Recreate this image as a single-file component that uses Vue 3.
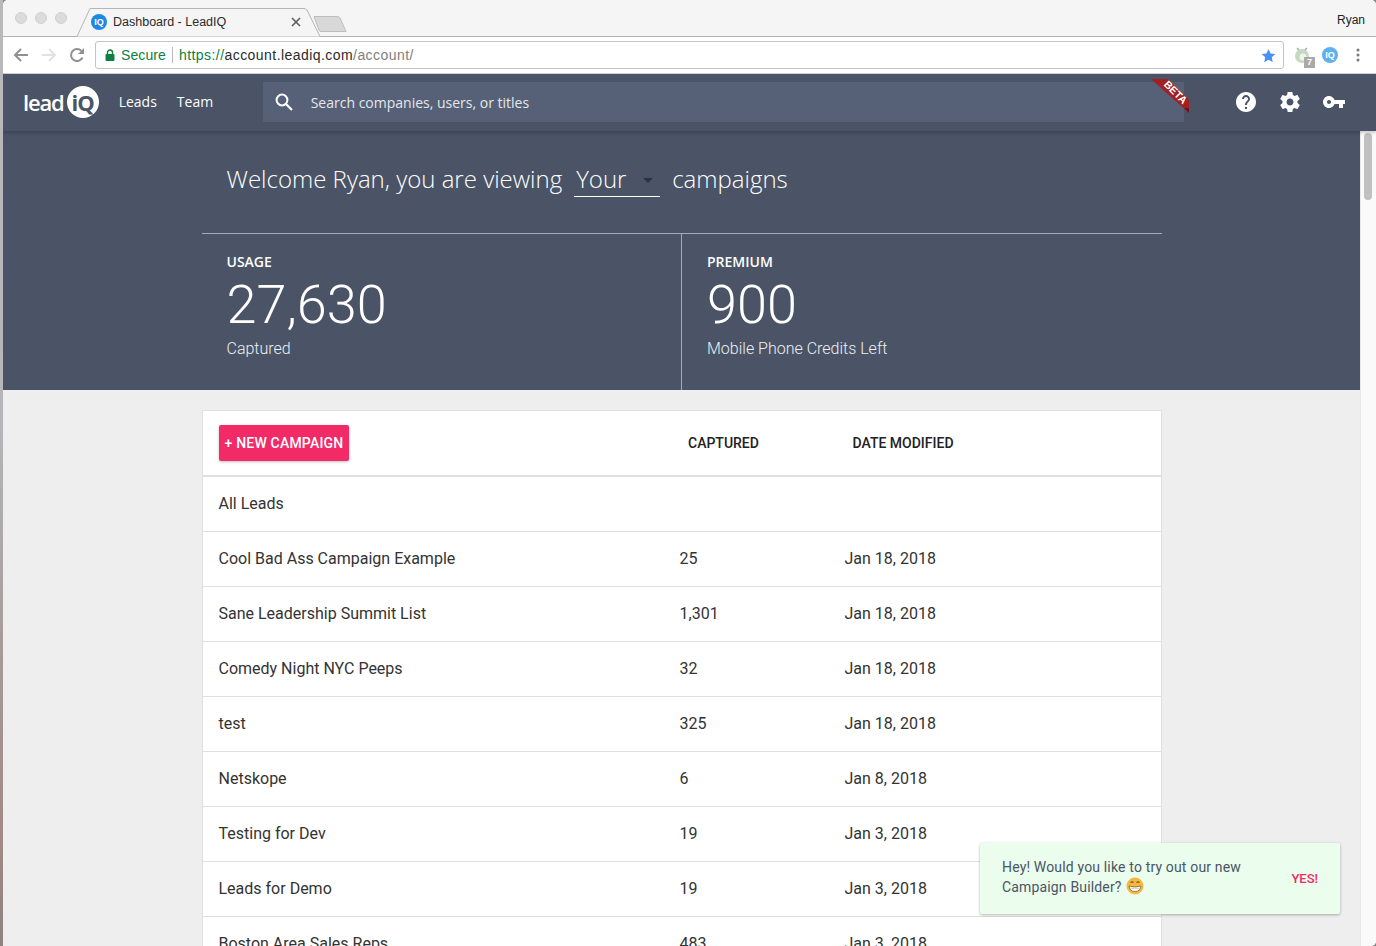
<script setup>
const stats = [
  { label: 'USAGE', value: '27,630', note: 'Captured' },
  { label: 'PREMIUM', value: '900', note: 'Mobile Phone Credits Left' },
];

const campaigns = [
  { name: 'All Leads', captured: '', date: '' },
  { name: 'Cool Bad Ass Campaign Example', captured: '25', date: 'Jan 18, 2018' },
  { name: 'Sane Leadership Summit List', captured: '1,301', date: 'Jan 18, 2018' },
  { name: 'Comedy Night NYC Peeps', captured: '32', date: 'Jan 18, 2018' },
  { name: 'test', captured: '325', date: 'Jan 18, 2018' },
  { name: 'Netskope', captured: '6', date: 'Jan 8, 2018' },
  { name: 'Testing for Dev', captured: '19', date: 'Jan 3, 2018' },
  { name: 'Leads for Demo', captured: '19', date: 'Jan 3, 2018' },
  { name: 'Boston Area Sales Reps', captured: '483', date: 'Jan 3, 2018' },
];
</script>

<template>
  <div class="desktop">
    <div class="wallpaper"></div>
    <div class="window">
      <!-- browser tabs -->
      <div class="tabstrip">
        <div class="lights"><i></i><i></i><i></i></div>
        <svg class="tab-shape" width="254" height="37" viewBox="0 0 254 37">
          <path d="M0 36.5H2L15 8.500Q15.500 8.500 18 8.500H228Q231 8.500 232 10L245 36.500H254" fill="#f5f5f5" stroke="#b4b4b4" />
        </svg>
        <div class="tab">
          <span class="favicon">IQ</span>
          <span class="tab-title">Dashboard - LeadIQ</span>
          <svg class="tab-close" width="10" height="10" viewBox="0 0 10 10">
            <path d="M1 1L9 9M9 1L1 9" stroke="#5a5a5a" stroke-width="1.6" />
          </svg>
        </div>
        <svg class="new-tab" width="34" height="18" viewBox="0 0 34 18">
          <path d="M1 1.5H24Q26 1.5 27 3L33 16.5H8Q6.5 16.5 6 15Z" fill="#d8d8d8" stroke="#bdbdbd" />
        </svg>
        <span class="profile">Ryan</span>
      </div>

      <!-- browser toolbar -->
      <div class="toolbar">
        <svg class="nav-icon" width="16" height="16" viewBox="0 0 16 16">
          <path d="M15 8H2M8 2L2 8L8 14" fill="none" stroke="#909090" stroke-width="2" />
        </svg>
        <svg class="nav-icon" width="16" height="16" viewBox="0 0 16 16">
          <path d="M1 8H14M8 2L14 8L8 14" fill="none" stroke="#e2e2e2" stroke-width="2" />
        </svg>
        <svg class="nav-icon" width="16" height="16" viewBox="0 0 16 16">
          <path d="M13.5 10.5A6 6 0 1 1 12.3 3.8" fill="none" stroke="#909090" stroke-width="2" />
          <path d="M15 1V7H9Z" fill="#909090" />
        </svg>
        <div class="omnibox">
          <svg width="10" height="12" viewBox="0 0 10 12">
            <path d="M2.5 5V3.5a2.5 2.5 0 0 1 5 0V5" fill="none" stroke="#0b8043" stroke-width="1.4" />
            <rect x="0.5" y="5" width="9" height="7" rx="1" fill="#0b8043" />
          </svg>
          <span class="secure">Secure</span>
          <span class="omni-sep"></span>
          <span class="url"><span class="scheme">https://</span><span class="host">account.leadiq.com</span>/account/</span>
          <svg class="star" width="15" height="15" viewBox="0 0 24 24">
            <path d="M12 1.5l3.3 7.2 7.7.9-5.7 5.3 1.5 7.7L12 18.7l-6.8 3.9 1.5-7.7L1 9.6l7.7-.9z" fill="#4a90f0" />
          </svg>
        </div>
        <div class="extensions">
          <span class="ext-grey">
            <svg width="18" height="18" viewBox="0 0 18 18">
              <circle cx="8" cy="10" r="7" fill="#c5d8c0" />
              <circle cx="9" cy="11" r="3.5" fill="#eef3ec" />
              <path d="M3 2L5 4M13 2L11 4" stroke="#a5a5a5" stroke-width="1.4" />
            </svg>
            <b>7</b>
          </span>
          <span class="ext-iq">IQ</span>
          <svg class="ext-menu" width="4" height="14" viewBox="0 0 4 14">
            <circle cx="2" cy="2" r="1.5" fill="#777" />
            <circle cx="2" cy="7" r="1.5" fill="#777" />
            <circle cx="2" cy="12" r="1.5" fill="#777" />
          </svg>
        </div>
      </div>

      <!-- app header -->
      <header class="appbar">
        <div class="logo">lead<span>iQ</span></div>
        <nav class="appnav">
          <a>Leads</a>
          <a>Team</a>
        </nav>
        <div class="search">
          <svg width="20" height="20" viewBox="0 0 20 20">
            <circle cx="8" cy="8" r="5.4" fill="none" stroke="#fff" stroke-width="2" />
            <path d="M12 12L18 18" stroke="#fff" stroke-width="2.2" />
          </svg>
          <span>Search companies, users, or titles</span>
          <div class="beta">
            <svg width="38" height="34" viewBox="0 0 38 34">
              <path d="M0 0H17L38 21V34Z" fill="#a41f22" />
              <path d="M33 29L38 34V29Z" fill="#6e1416" />
            </svg>
            <em>BETA</em>
          </div>
        </div>
        <div class="app-actions">
          <svg width="24" height="24" viewBox="0 0 24 24">
            <path fill="#fff" d="M12 2C6.48 2 2 6.48 2 12s4.48 10 10 10 10-4.48 10-10S17.52 2 12 2zm1 17h-2v-2h2v2zm2.07-7.75l-.9.92C13.45 12.9 13 13.5 13 15h-2v-.5c0-1.1.45-2.1 1.17-2.83l1.24-1.26c.37-.36.59-.86.59-1.41 0-1.1-.9-2-2-2s-2 .9-2 2H8c0-2.21 1.79-4 4-4s4 1.79 4 4c0 .88-.36 1.68-.93 2.25z" />
          </svg>
          <svg width="24" height="24" viewBox="0 0 24 24">
            <path fill="#fff" d="M19.43 12.98c.04-.32.07-.64.07-.98s-.03-.66-.07-.98l2.11-1.65c.19-.15.24-.42.12-.64l-2-3.46c-.12-.22-.39-.3-.61-.22l-2.49 1c-.52-.4-1.08-.73-1.69-.98l-.38-2.65C14.46 2.18 14.25 2 14 2h-4c-.25 0-.46.18-.49.42l-.38 2.65c-.61.25-1.17.59-1.69.98l-2.49-1c-.23-.09-.49 0-.61.22l-2 3.46c-.13.22-.07.49.12.64l2.11 1.65c-.04.32-.07.65-.07.98s.03.66.07.98l-2.11 1.65c-.19.15-.24.42-.12.64l2 3.46c.12.22.39.3.61.22l2.49-1c.52.4 1.08.73 1.69.98l.38 2.65c.03.24.24.42.49.42h4c.25 0 .46-.18.49-.42l.38-2.65c.61-.25 1.17-.59 1.69-.98l2.49 1c.23.09.49 0 .61-.22l2-3.46c.12-.22.07-.49-.12-.64l-2.11-1.65zM12 15.5c-1.93 0-3.5-1.57-3.5-3.5s1.57-3.5 3.5-3.5 3.5 1.57 3.5 3.5-1.57 3.5-3.5 3.5z" />
          </svg>
          <svg width="24" height="24" viewBox="0 0 24 24">
            <path fill="#fff" d="M12.65 10C11.83 7.67 9.61 6 7 6c-3.31 0-6 2.69-6 6s2.69 6 6 6c2.61 0 4.83-1.67 5.65-4H17v4h4v-4h2v-4H12.65zM7 14c-1.1 0-2-.9-2-2s.9-2 2-2 2 .9 2 2-.9 2-2 2z" />
          </svg>
        </div>
      </header>

      <div class="viewport">
        <main class="page">
          <section class="hero">
            <div class="hero-inner">
              <h1 class="welcome">
                <span>Welcome Ryan, you are viewing</span>
                <span class="select">Your<i></i></span>
                <span>campaigns</span>
              </h1>
              <div class="stats">
                <div v-for="stat in stats" :key="stat.label" class="stat">
                  <div class="stat-label">{{ stat.label }}</div>
                  <div class="stat-value">{{ stat.value }}</div>
                  <div class="stat-note">{{ stat.note }}</div>
                </div>
              </div>
            </div>
          </section>

          <section class="table">
            <div class="table-head">
              <div class="col-name"><button class="new-campaign">+ NEW CAMPAIGN</button></div>
              <div class="col-captured">CAPTURED</div>
              <div class="col-date">DATE MODIFIED</div>
            </div>
            <div v-for="row in campaigns" :key="row.name" class="table-row">
              <div class="col-name">{{ row.name }}</div>
              <div class="col-captured">{{ row.captured }}</div>
              <div class="col-date">{{ row.date }}</div>
            </div>
          </section>
        </main>
        <div class="scrollbar"><div class="thumb"></div></div>

        <div class="toast">
          <p>
            Hey! Would you like to try out our new<br />
            Campaign Builder?
            <svg class="emoji" width="18" height="18" viewBox="0 0 18 18">
              <circle cx="9" cy="9" r="8.5" fill="#f5b942" />
              <path d="M4.5 5.6q1.6-1.5 3 0M10.500 5.600q1.600-1.500 3 0" fill="none" stroke="#7a5316" stroke-width="1.2" />
              <path d="M3 9q6 2 12 0q-.5 5.500-6 5.500T3 9Z" fill="#fff" stroke="#7a5316" stroke-width=".7" />
              <path d="M3.500 11.300h11" stroke="#a9a9a9" stroke-width=".6" />
            </svg>
          </p>
          <a class="toast-action">YES!</a>
        </div>
      </div>
    </div>
  </div>
</template>

<style>
html, body {
  margin: 0;
  height: 100%;
  overflow: hidden;
}
</style>

<style scoped>
.desktop {
  display: flex;
  width: 1376px;
  height: 946px;
  overflow: hidden;
  background: #8a8484;
  font-family: Roboto, sans-serif;
}

.wallpaper {
  flex: 0 0 3px;
  background: linear-gradient(#b9b9bb 0, #b4b6b9 45%, #a59a98 70%, #a08a85 88%, #8f8480 100%);
}

.window {
  flex: 1;
  min-width: 0;
  display: flex;
  flex-direction: column;
  background: #fff;
  border-radius: 5px 5px 5px 0;
  overflow: hidden;
}

/* browser chrome */
.tabstrip {
  position: relative;
  flex: 0 0 37px;
  box-sizing: border-box;
  display: flex;
  align-items: center;
  background: #f5f5f5;
  border-bottom: 1px solid #b4b4b4;
}

.lights {
  display: flex;
  gap: 8px;
  padding-left: 12px;
}

.lights i {
  width: 12px;
  height: 12px;
  border-radius: 50%;
  background: #dcdcdc;
  border: .5px solid #d0d0d0;
  box-sizing: border-box;
}

.tab-shape {
  position: absolute;
  left: 72px;
  top: 0;
}

.tab {
  position: relative;
  display: flex;
  align-items: center;
  margin: 8px 0 0 24px;
  width: 212px;
}

.favicon {
  flex: 0 0 16px;
  height: 16px;
  border-radius: 50%;
  background: #1e88e5;
  color: #fff;
  font: 700 9px/16px "Liberation Sans", sans-serif;
  text-align: center;
}

.tab-title {
  flex: 1;
  margin-left: 6px;
  font: 12.500px "Liberation Sans", sans-serif;
  color: #2b2b2b;
}

.tab-close {
  margin-right: 2px;
}

.new-tab {
  margin: 11px 0 0 10px;
}

.profile {
  margin-left: auto;
  margin-right: 11px;
  margin-top: 3px;
  font: 12px "Liberation Sans", sans-serif;
  color: #222;
}

.toolbar {
  flex: 0 0 37px;
  box-sizing: border-box;
  display: flex;
  align-items: center;
  padding: 0 10px;
  background: #fff;
  border-bottom: 1px solid #d0d0d0;
}

.nav-icon {
  margin-right: 12px;
}

.nav-icon:nth-child(3) {
  margin-right: 10px;
}

.omnibox {
  flex: 0 0 1189px;
  height: 28px;
  box-sizing: border-box;
  display: flex;
  align-items: center;
  padding: 0 7px 0 9px;
  border: 1px solid #c4c4c4;
  border-radius: 3px;
  font: 14px "Liberation Sans", sans-serif;
  color: #808080;
}

.secure {
  margin-left: 6px;
  letter-spacing: .1px;
  color: #0b8043;
}

.omni-sep {
  width: 1px;
  height: 16px;
  margin: 0 6px;
  background: #bbb;
}

.url {
  letter-spacing: .44px;
}

.scheme {
  color: #0b8043;
}

.host {
  color: #2b2b2b;
}

.star {
  margin-left: auto;
}

.extensions {
  display: flex;
  align-items: center;
  gap: 10px;
  padding-left: 10px;
}

.ext-menu {
  margin-left: 8px;
}

.ext-grey {
  position: relative;
  display: flex;
}

.ext-grey b {
  position: absolute;
  right: -3px;
  bottom: -4px;
  width: 11px;
  height: 11px;
  background: #a9a9a9;
  color: #fff;
  font: 700 9px/11px "Liberation Sans", sans-serif;
  text-align: center;
}

.ext-iq {
  width: 16px;
  height: 16px;
  border-radius: 50%;
  background: #5eb1ee;
  color: #fff;
  font: 700 9px/16px "Liberation Sans", sans-serif;
  text-align: center;
}

/* app header */
.appbar {
  position: relative;
  z-index: 2;
  flex: 0 0 57px;
  box-sizing: border-box;
  padding-bottom: 1px;
  display: flex;
  align-items: center;
  background: #4a5466;
  box-shadow: 0 2px 3px rgba(0, 0, 0, .18);
}

.logo {
  display: flex;
  align-items: center;
  margin-left: 20px;
  font: 600 22px "Open Sans", sans-serif;
  letter-spacing: -1.15px;
  color: #fff;
}

.logo span {
  width: 32px;
  height: 32px;
  margin-left: 3px;
  border-radius: 50%;
  background: #fff;
  color: #4a5466;
  font: 700 22px/32px "Open Sans", sans-serif;
  text-align: center;
  letter-spacing: -1px;
}

.appnav {
  display: flex;
  gap: 20px;
  margin: 0 0 2px 20px;
  width: 144px;
  font: 14px "Open Sans", sans-serif;
  color: #fff;
}

.search {
  position: relative;
  flex: 0 0 921px;
  height: 40px;
  box-sizing: border-box;
  display: flex;
  align-items: center;
  gap: 17px;
  padding-left: 11px;
  background: #566177;
  font: 14px "Open Sans", sans-serif;
  color: #e4e7ec;
}

.beta {
  position: absolute;
  top: -3px;
  right: -5px;
  width: 38px;
  height: 34px;
}

.beta svg {
  display: block;
}

.beta em {
  position: absolute;
  left: 11px;
  top: 7px;
  transform: rotate(45deg);
  font: 700 10.500px "Liberation Sans", sans-serif;
  color: #fff;
}

.app-actions {
  display: flex;
  gap: 20px;
  margin-left: 50px;
}

/* page */
.viewport {
  position: relative;
  flex: 1;
  min-height: 0;
  display: flex;
}

.page {
  flex: 1;
  min-width: 0;
  background: #eee;
  overflow: hidden;
}

.scrollbar {
  flex: 0 0 16px;
  box-sizing: border-box;
  padding-top: 2px;
  background: #fafafa;
  border-left: 1px solid #e8e8e8;
}

.thumb {
  width: 8px;
  height: 67px;
  margin-left: 3px;
  border-radius: 4px;
  background: #c0c0c0;
}

.hero {
  box-sizing: border-box;
  height: 259px;
  padding: 0 198px 0 199px;
  background: #4a5466;
  color: #fff;
}

.hero-inner {
  height: 100%;
  display: flex;
  flex-direction: column;
}

.welcome {
  box-sizing: border-box;
  flex: 0 0 102px;
  display: flex;
  align-items: flex-start;
  gap: 12px;
  margin: 0;
  padding: 30px 0 0 24.500px;
  font: 300 24px/36px "Open Sans", sans-serif;
  color: #fff;
}

.select {
  position: relative;
  box-sizing: border-box;
  width: 86px;
  height: 36px;
  padding-left: 2px;
  border-bottom: 1px solid #fff;
}

.select i {
  position: absolute;
  right: 7px;
  top: 17px;
  border: 5px solid transparent;
  border-top-color: #2c3340;
  border-bottom: 0;
}

.stats {
  flex: 1;
  display: grid;
  grid-template-columns: 479px 481px;
  border-top: 1px solid #a4abb5;
}

.stat {
  padding: 18px 0 0 24.500px;
}

.stat + .stat {
  padding-left: 25px;
  border-left: 1px solid #a4abb5;
}

.stat-label {
  font: 600 14px/20px "Open Sans", sans-serif;
}

.stat-value {
  margin-top: 3px;
  font: 300 54px/60px Roboto, sans-serif;
}

.stat-note {
  margin-top: 2px;
  font: 300 16px/24px Roboto, sans-serif;
  color: #eef0f3;
}

.table {
  margin: 20px 198px 0 199px;
  background: #fff;
  border: 1px solid #e0e0e0;
  border-bottom: 0;
  font: 16px Roboto, sans-serif;
  color: #333;
}

.table-head,
.table-row {
  display: grid;
  grid-template-columns: 476.500px 165px 1fr;
  align-items: center;
}

.table-head {
  height: 64px;
  border-bottom: 2px solid #e0e0e0;
  font-size: 14px;
  font-weight: 500;
  color: #222;
}

.table-head .col-captured {
  padding-left: 8.500px;
}

.table-head .col-date {
  padding-left: 8px;
}

.table-row {
  height: 52px;
  padding-bottom: 2px;
  border-bottom: 1px solid #e0e0e0;
}

.col-name {
  padding-left: 15.500px;
}

.new-campaign {
  display: block;
  width: 130px;
  height: 36px;
  margin-left: .5px;
  padding: 0;
  border: 0;
  border-radius: 2px;
  background: #f22a68;
  box-shadow: 0 1px 3px rgba(0, 0, 0, .25);
  color: #fff;
  font: 500 14px Roboto, sans-serif;
  letter-spacing: .2px;
}

.toast {
  position: absolute;
  left: 977px;
  bottom: 32px;
  width: 360px;
  height: 71px;
  box-sizing: border-box;
  display: flex;
  align-items: center;
  justify-content: space-between;
  padding: 0 22px 2px;
  background: #ebfdec;
  border-radius: 2px;
  box-shadow: 0 1px 3px rgba(0, 0, 0, .3);
  font: 14px/19px Roboto, sans-serif;
  color: #4a5466;
  letter-spacing: .16px;
}

.toast p {
  margin: 0;
}

.emoji {
  margin-left: 1px;
  vertical-align: -3px;
}

.toast-action {
  margin-top: 2px;
  font-weight: 500;
  color: #f22a68;
  font-size: 13px;
  letter-spacing: 0;
}
</style>
